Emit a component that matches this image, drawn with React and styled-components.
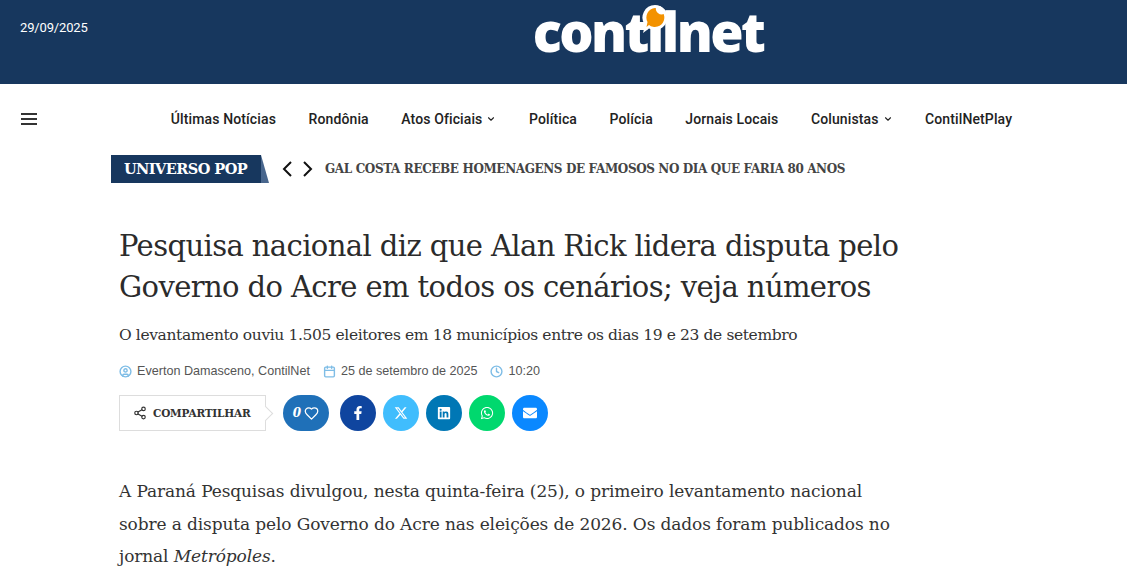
import React from "react";
import styled, { createGlobalStyle } from "styled-components";
import { FaFacebookF, FaLinkedin, FaWhatsapp, FaEnvelope } from "react-icons/fa";
import { FaXTwitter } from "react-icons/fa6";
import { LuChevronDown, LuCalendar, LuClock, LuCircleUser, LuShare2, LuHeart } from "react-icons/lu";

const serif = `"DejaVu Serif", "Liberation Serif", serif`;

const GlobalStyle = createGlobalStyle`
  html, body {
    margin: 0;
    padding: 0;
    background: #fff;
    height: 576px;
    overflow: hidden;
  }
  * { box-sizing: border-box; }
`;

const TopBar = styled.header`
  height: 84px;
  background: #17375e;
  display: flex;
  justify-content: center;
  align-items: flex-start;
  position: relative;
`;

const DateText = styled.span`
  position: absolute;
  left: 20px;
  top: 19px;
  font: 13px/17px Roboto, sans-serif;
  letter-spacing: -0.15px;
  color: #fff;
`;

const Logo = styled.div`
  position: relative;
  margin: 0 0 0 173px;
  padding-right: 4px;
  font: 800 54px/62px "Open Sans", sans-serif;
  letter-spacing: -2.6px;
  white-space: nowrap;
  color: #fff;
`;

const LogoBubble = styled.svg`
  position: absolute;
  left: 108px;
  top: 4px;
  width: 28px;
  height: 30px;
`;

const NavRow = styled.nav`
  height: 69px;
  padding: 0 0 0 56px;
  display: flex;
  align-items: center;
  justify-content: center;
  position: relative;
`;

const Burger = styled.button`
  position: absolute;
  left: 21px;
  top: 29px;
  width: 16px;
  height: 12px;
  padding: 0;
  border: 0;
  background: none;
  display: flex;
  flex-direction: column;
  justify-content: space-between;
  span {
    display: block;
    height: 2px;
    background: #333;
  }
`;

const NavList = styled.ul`
  list-style: none;
  margin: 0;
  padding: 0;
  display: flex;
  gap: 32.5px;
`;

const NavItem = styled.li`
  display: flex;
  align-items: center;
  gap: 4px;
  font: 500 14px/20px Roboto, sans-serif;
  letter-spacing: 0.12px;
  color: #222;
  svg {
    width: 10px;
    height: 10px;
    color: #222;
    stroke-width: 2.6;
  }
`;

const Ticker = styled.div`
  margin: 2px 0 0 111px;
  height: 28px;
  display: flex;
  align-items: center;
`;

const TickerLabel = styled.div`
  height: 28px;
  width: 150px;
  padding-left: 13px;
  background: #17375e;
  font: 700 14.5px/28px ${serif};
  letter-spacing: -0.54px;
  white-space: nowrap;
  color: #fff;
  position: relative;
  &::after {
    content: "";
    position: absolute;
    left: 100%;
    top: 0;
    width: 8px;
    height: 28px;
    background: #48668d;
    clip-path: polygon(0 0, 100% 100%, 0 100%);
  }
`;

const TickerArrows = styled.div`
  display: flex;
  gap: 11px;
  margin-left: 21px;
`;

const Arrow = styled.svg`
  display: block;
  width: 10px;
  height: 16px;
  fill: none;
  stroke: #111;
  stroke-width: 2;
`;

const TickerText = styled.span`
  margin-left: 12px;
  font: 700 12px/20px ${serif};
  letter-spacing: -0.38px;
  color: #444;
`;

const Article = styled.article`
  margin: 43px 0 0 119px;
  width: 790px;
`;

const Title = styled.h1`
  margin: 0;
  font: 400 29px/41px ${serif};
  letter-spacing: -0.6px;
  color: #2b2b2b;
`;

const Subtitle = styled.p`
  margin: 15px 0 0;
  font: 400 15.5px/24px ${serif};
  letter-spacing: -0.38px;
  color: #333;
`;

const Meta = styled.div`
  margin-top: 15px;
  display: flex;
  align-items: center;
  gap: 13px;
  font: 12.6px/18px "Liberation Sans", sans-serif;
  color: #555;
`;

const MetaItem = styled.span`
  display: flex;
  align-items: center;
  gap: 5px;
  svg {
    width: 13px;
    height: 13px;
    color: #7fbde6;
    stroke-width: 2.6;
  }
`;

const ShareRow = styled.div`
  margin-top: 15px;
  display: flex;
  align-items: center;
`;

const ShareBox = styled.div`
  width: 147px;
  height: 36px;
  border: 1px solid #ddd;
  display: flex;
  align-items: center;
  gap: 6px;
  padding-left: 13px;
  font: 700 10.5px/1 ${serif};
  letter-spacing: -0.2px;
  color: #333;
  position: relative;
  svg {
    width: 14px;
    height: 14px;
    color: #333;
  }
  &::after {
    content: "";
    position: absolute;
    right: -6px;
    top: 12px;
    width: 10px;
    height: 10px;
    background: #fff;
    border-top: 1px solid #ddd;
    border-right: 1px solid #ddd;
    transform: rotate(45deg);
  }
`;

const LikeButton = styled.div`
  margin-left: 17px;
  width: 46px;
  height: 36px;
  border-radius: 18px;
  background: #1f70b8;
  color: #fff;
  display: flex;
  align-items: center;
  justify-content: center;
  gap: 3px;
  font: italic 700 12px/1 ${serif};
  svg {
    width: 15px;
    height: 15px;
  }
`;

const Socials = styled.div`
  margin-left: 11px;
  display: flex;
  gap: 7px;
`;

const SocialButton = styled.a`
  width: 36px;
  height: 36px;
  border-radius: 50%;
  background: ${(p) => p.$bg};
  color: #fff;
  display: flex;
  align-items: center;
  justify-content: center;
  svg {
    width: 14px;
    height: 14px;
  }
`;

const Body = styled.p`
  margin: 44px 0 0;
  font: 400 17px/32.5px ${serif};
  letter-spacing: -0.12px;
  white-space: nowrap;
  color: #333;
`;

const socials = [
  { bg: "#0f459f", icon: <FaFacebookF /> },
  { bg: "#40bdfd", icon: <FaXTwitter /> },
  { bg: "#0077b5", icon: <FaLinkedin /> },
  { bg: "#00d86e", icon: <FaWhatsapp /> },
  { bg: "#0a88ff", icon: <FaEnvelope /> },
];

const navItems = [
  { label: "Últimas Notícias" },
  { label: "Rondônia" },
  { label: "Atos Oficiais", more: true },
  { label: "Política" },
  { label: "Polícia" },
  { label: "Jornais Locais" },
  { label: "Colunistas", more: true },
  { label: "ContilNetPlay" },
];

export default function App() {
  return (
    <>
      <GlobalStyle />
      <TopBar>
        <DateText>29/09/2025</DateText>
        <Logo>
          contilnet
          <LogoBubble viewBox="0 0 28 30">
            <path d="M14 1a12.500 12.500 0 1 1-6 23.500L2 29l2-8A12.500 12.500 0 0 1 14 1z" fill="#fff" />
            <path d="M14 4a9.500 9.500 0 1 1-6 17l-2.500 2 1-5A9.500 9.500 0 0 1 14 4z" fill="#f39200" />
            <path d="M15 3a6 6 0 0 0 8 7l1-4-5-4z" fill="#fff" />
          </LogoBubble>
        </Logo>
      </TopBar>
      <NavRow>
        <Burger aria-label="Menu">
          <span />
          <span />
          <span />
        </Burger>
        <NavList>
          {navItems.map((item) => (
            <NavItem key={item.label}>
              {item.label}
              {item.more && <LuChevronDown />}
            </NavItem>
          ))}
        </NavList>
      </NavRow>
      <Ticker>
        <TickerLabel>UNIVERSO POP</TickerLabel>
        <TickerArrows>
          <Arrow viewBox="0 0 10 16">
            <path d="M9 1 2 8l7 7" />
          </Arrow>
          <Arrow viewBox="0 0 10 16">
            <path d="m1 1 7 7-7 7" />
          </Arrow>
        </TickerArrows>
        <TickerText>GAL COSTA RECEBE HOMENAGENS DE FAMOSOS NO DIA QUE FARIA 80 ANOS</TickerText>
      </Ticker>
      <Article>
        <Title>
          Pesquisa nacional diz que Alan Rick lidera disputa pelo
          <br />
          Governo do Acre em todos os cenários; veja números
        </Title>
        <Subtitle>O levantamento ouviu 1.505 eleitores em 18 municípios entre os dias 19 e 23 de setembro</Subtitle>
        <Meta>
          <MetaItem>
            <LuCircleUser />
            Everton Damasceno, ContilNet
          </MetaItem>
          <MetaItem>
            <LuCalendar />
            25 de setembro de 2025
          </MetaItem>
          <MetaItem>
            <LuClock />
            10:20
          </MetaItem>
        </Meta>
        <ShareRow>
          <ShareBox>
            <LuShare2 />
            COMPARTILHAR
          </ShareBox>
          <LikeButton>
            0 <LuHeart />
          </LikeButton>
          <Socials>
            {socials.map((s) => (
              <SocialButton key={s.bg} $bg={s.bg}>
                {s.icon}
              </SocialButton>
            ))}
          </Socials>
        </ShareRow>
        <Body>
          A Paraná Pesquisas divulgou, nesta quinta-feira (25), o primeiro levantamento nacional
          <br />
          sobre a disputa pelo Governo do Acre nas eleições de 2026. Os dados foram publicados no
          <br />
          jornal <em>Metrópoles</em>.
        </Body>
      </Article>
    </>
  );
}
